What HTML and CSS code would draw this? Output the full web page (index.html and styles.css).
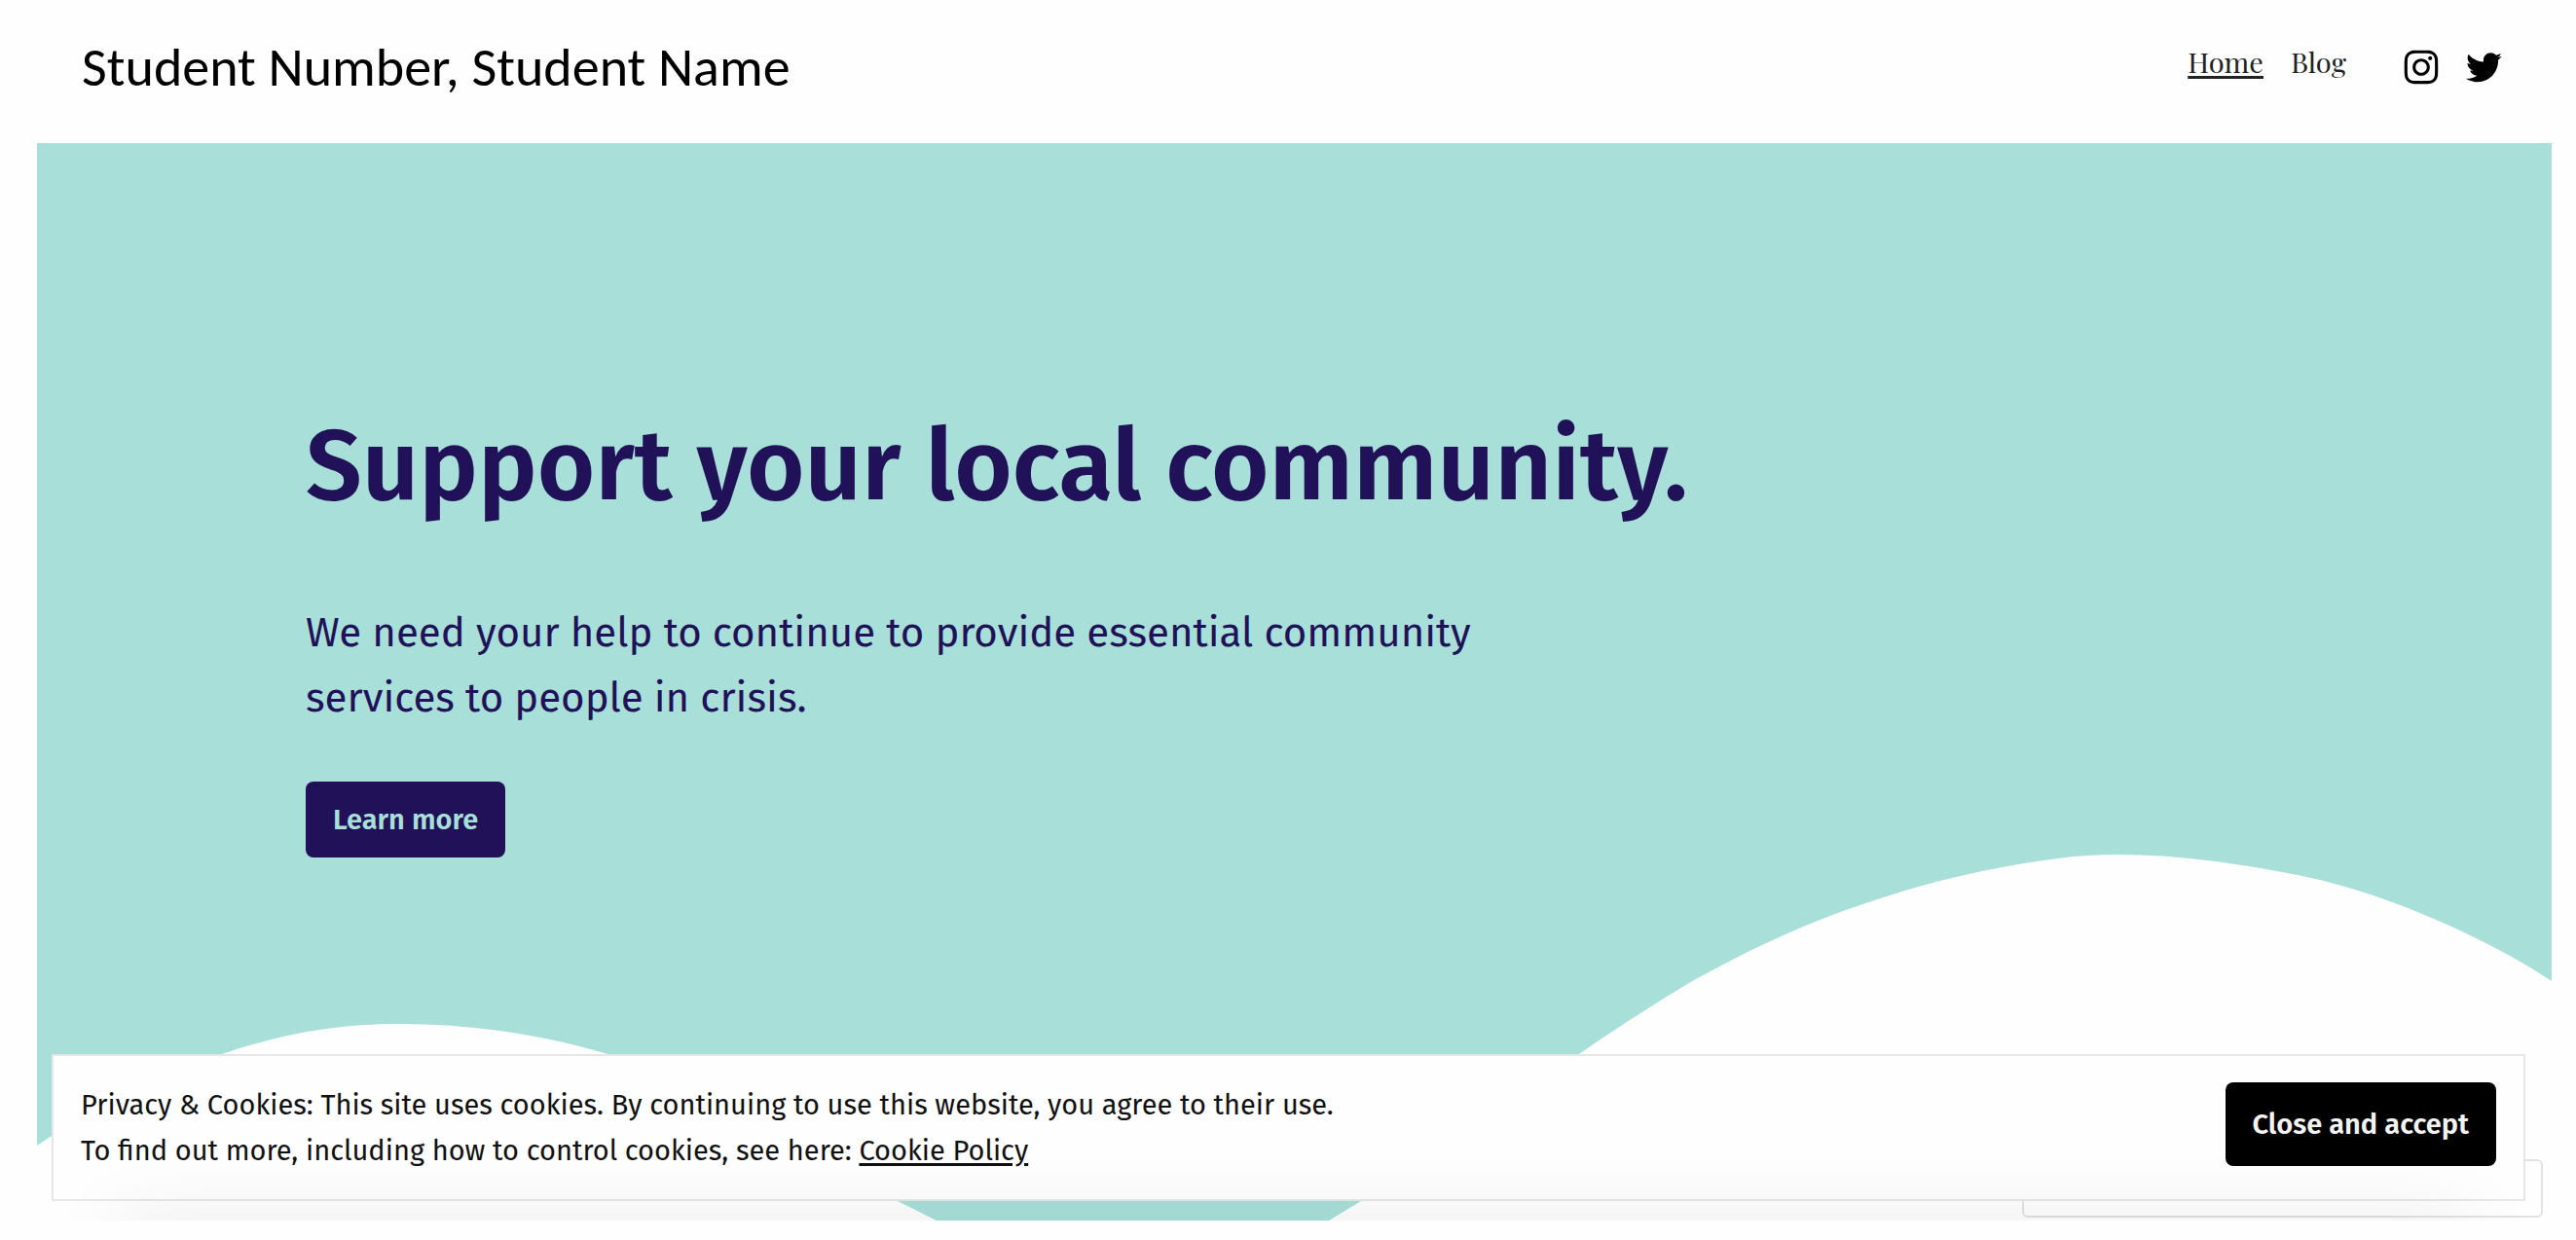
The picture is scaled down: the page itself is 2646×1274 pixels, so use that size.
FILE: index.html
```html
<!DOCTYPE html>
<html lang="en">
<head>
  <meta charset="utf-8">
  <meta name="viewport" content="width=device-width, initial-scale=1">
  <title>Student Number, Student Name</title>
  <link rel="stylesheet" href="styles.css">
</head>
<body>
  <header class="site-header">
    <p class="site-title">Student Number, Student Name</p>
    <nav class="site-nav" aria-label="Main">
      <a class="nav-link current" href="#" aria-current="page">Home</a>
      <a class="nav-link" href="#">Blog</a>
    </nav>
    <div class="social">
      <a class="social-link" href="#" aria-label="Instagram">
        <svg viewBox="0 0 24 24" width="46" height="46" aria-hidden="true"><path d="M12,4.622c2.403,0,2.688,0.009,3.637,0.052c0.877,0.04,1.354,0.187,1.671,0.31c0.42,0.163,0.72,0.358,1.035,0.673c0.315,0.315,0.51,0.615,0.673,1.035c0.123,0.317,0.27,0.794,0.31,1.671c0.043,0.949,0.052,1.234,0.052,3.637s-0.009,2.688-0.052,3.637c-0.04,0.877-0.187,1.354-0.31,1.671c-0.163,0.42-0.358,0.72-0.673,1.035c-0.315,0.315-0.615,0.51-1.035,0.673c-0.317,0.123-0.794,0.27-1.671,0.31c-0.949,0.043-1.233,0.052-3.637,0.052s-2.688-0.009-3.637-0.052c-0.877-0.04-1.354-0.187-1.671-0.31c-0.42-0.163-0.72-0.358-1.035-0.673c-0.315-0.315-0.51-0.615-0.673-1.035c-0.123-0.317-0.27-0.794-0.31-1.671C4.631,14.688,4.622,14.403,4.622,12s0.009-2.688,0.052-3.637c0.04-0.877,0.187-1.354,0.31-1.671c0.163-0.42,0.358-0.72,0.673-1.035c0.315-0.315,0.615-0.51,1.035-0.673c0.317-0.123,0.794-0.27,1.671-0.31C9.312,4.631,9.597,4.622,12,4.622M12,3C9.556,3,9.249,3.01,8.289,3.054C7.331,3.098,6.677,3.25,6.105,3.472C5.513,3.702,5.011,4.01,4.511,4.511c-0.5,0.5-0.808,1.002-1.038,1.594C3.25,6.677,3.098,7.331,3.054,8.289C3.01,9.249,3,9.556,3,12c0,2.444,0.01,2.751,0.054,3.711c0.044,0.958,0.196,1.612,0.418,2.185c0.23,0.592,0.538,1.094,1.038,1.594c0.5,0.5,1.002,0.808,1.594,1.038c0.572,0.222,1.227,0.375,2.185,0.418C9.249,20.99,9.556,21,12,21s2.751-0.01,3.711-0.054c0.958-0.044,1.612-0.196,2.185-0.418c0.592-0.23,1.094-0.538,1.594-1.038c0.5-0.5,0.808-1.002,1.038-1.594c0.222-0.572,0.375-1.227,0.418-2.185C20.99,14.751,21,14.444,21,12s-0.01-2.751-0.054-3.711c-0.044-0.958-0.196-1.612-0.418-2.185c-0.23-0.592-0.538-1.094-1.038-1.594c-0.5-0.5-1.002-0.808-1.594-1.038c-0.572-0.222-1.227-0.375-2.185-0.418C14.751,3.01,14.444,3,12,3L12,3z M12,7.378c-2.552,0-4.622,2.069-4.622,4.622S9.448,16.622,12,16.622s4.622-2.069,4.622-4.622S14.552,7.378,12,7.378z M12,15c-1.657,0-3-1.343-3-3s1.343-3,3-3s3,1.343,3,3S13.657,15,12,15z M16.804,6.116c-0.596,0-1.08,0.484-1.08,1.08s0.484,1.08,1.08,1.08c0.596,0,1.08-0.484,1.08-1.08S17.401,6.116,16.804,6.116z"/></svg>
      </a>
      <a class="social-link" href="#" aria-label="Twitter">
        <svg viewBox="0 0 24 24" width="44" height="44" aria-hidden="true"><path d="M22.23,5.924c-0.736,0.326-1.527,0.547-2.357,0.646c0.847-0.508,1.498-1.312,1.804-2.27c-0.793,0.47-1.671,0.812-2.606,0.996C18.324,4.498,17.257,4,16.077,4c-2.266,0-4.103,1.837-4.103,4.103c0,0.322,0.036,0.635,0.106,0.935C8.67,8.867,5.647,7.234,3.623,4.751C3.27,5.357,3.067,6.062,3.067,6.814c0,1.424,0.724,2.679,1.825,3.415c-0.673-0.021-1.305-0.206-1.859-0.513c0,0.017,0,0.034,0,0.052c0,1.988,1.414,3.647,3.292,4.023c-0.344,0.094-0.707,0.144-1.081,0.144c-0.264,0-0.521-0.026-0.772-0.074c0.522,1.63,2.038,2.816,3.833,2.85c-1.404,1.1-3.174,1.756-5.096,1.756c-0.331,0-0.658-0.019-0.979-0.057c1.816,1.164,3.973,1.843,6.29,1.843c7.547,0,11.675-6.252,11.675-11.675c0-0.178-0.004-0.355-0.012-0.531C20.985,7.47,21.68,6.747,22.23,5.924z"/></svg>
      </a>
    </div>
  </header>

  <main class="hero">
    <svg class="hills" viewBox="0 0 2583 1107" preserveAspectRatio="none" aria-hidden="true">
      <path d="M0 1030C60 990 125 955 193 935C255 914 310 905 373 905C440 905 510 914 583 935C700 970 800 1035 884 1087L924 1107H0Z"/>
      <path d="M1327 1107L1360 1087C1440 1025 1500 985 1584 936C1620 911 1660 885 1702 860C1738 840 1774 822 1812 806C1852 789 1894 775 1936 763C1982 750 2030 741 2076 735C2097 732 2117 731 2137 731C2168 731 2199 733 2229 737C2270 742 2311 749 2349 758C2388 768 2425 781 2462 797C2504 815 2545 836 2583 861V1107Z"/>
    </svg>
    <section class="hero-content">
      <h1 class="hero-title">Support your local community.</h1>
      <p class="hero-text">We need your help to continue to provide essential community services to people in crisis.</p>
      <button class="button button-learn" type="button">Learn more</button>
    </section>
    <div class="widget"></div>
    <aside class="cookie-banner" aria-label="Cookies">
      <p class="cookie-text">Privacy &amp; Cookies: This site uses cookies. By continuing to use this website, you agree to their use.<br>To find out more, including how to control cookies, see here: <a class="cookie-link" href="#">Cookie Policy</a></p>
      <button class="button button-accept" type="button">Close and accept</button>
    </aside>
    <div class="bottom-shade"></div>
  </main>
</body>
</html>
```
FILE: styles.css
```css
* {
  box-sizing: border-box;
}

body {
  margin: 0;
  background: #fefefe;
  color: #111;
  font-family: "Fira Sans", "Noto Sans", sans-serif;
}

/* Header */
.site-header {
  display: flex;
  align-items: flex-start;
  height: 147px;
  padding: 35px 73px 0 84px;
}

.site-title {
  margin: 0 auto 0 0;
  color: #000;
  font-family: Carlito, Calibri, Lato, sans-serif;
  font-size: 56px;
  line-height: 68px;
}

.site-nav {
  display: flex;
  gap: 28px;
  margin-right: 54px;
}

.nav-link {
  color: #222;
  font-family: "Playfair Display", "Liberation Serif", serif;
  font-size: 29px;
  line-height: 56px;
  text-decoration: none;
}

.current {
  text-decoration: underline;
  text-decoration-thickness: 3px;
  text-underline-offset: 3px;
  text-decoration-skip-ink: none;
}

.social {
  display: flex;
  align-items: center;
  gap: 19px;
  padding-top: 11px;
}

.social-link {
  display: flex;
  color: #000;
}

.social-link svg {
  fill: currentColor;
}

/* Hero */
.hero {
  position: relative;
  overflow: hidden;
  min-height: calc(100vh - 167px);
  margin: 0 25px 20px 38px;
  padding: 270px 276px 360px;
  background: #a8dfd9;
}

.hills {
  position: absolute;
  inset: 0;
  width: 100%;
  height: 100%;
  fill: #fefefe;
}

.hero-content {
  position: relative;
  color: #201158;
}

.hero-title {
  margin: 0 0 76px;
  font-size: 102px;
  font-weight: 600;
  line-height: 124px;
}

.hero-text {
  max-width: 1240px;
  margin: 0 0 52px;
  font-size: 42px;
  line-height: 67px;
}

.button {
  border: 0;
  border-radius: 8px;
  font-family: inherit;
  font-size: 29px;
  font-weight: 600;
  cursor: pointer;
}

.button-learn {
  height: 78px;
  padding: 0 28px;
  background: #201158;
  color: #a8dfd9;
}

/* Cookie banner and the box that sits behind it */
.widget {
  position: absolute;
  right: 9px;
  bottom: 3px;
  width: 535px;
  height: 60px;
  border: 2px solid #e2e2e2;
  border-radius: 6px;
  background: #fefefe;
}

.cookie-banner {
  position: absolute;
  right: 27px;
  bottom: 20px;
  left: 15px;
  display: flex;
  align-items: flex-start;
  justify-content: space-between;
  padding: 27px 28px 26px;
  border: 2px solid #e6e6e6;
  background: #fefefe;
}

.cookie-text {
  margin: 0;
  font-size: 29px;
  line-height: 47px;
}

.cookie-link {
  color: inherit;
  text-decoration-thickness: 3px;
  text-underline-offset: 3px;
}

.button-accept {
  height: 86px;
  padding: 0 28px;
  background: #000;
  color: #f2f2f2;
}

.bottom-shade {
  position: absolute;
  right: 80px;
  bottom: -60px;
  left: 80px;
  height: 60px;
  box-shadow: 0 0 80px rgba(0, 0, 0, 0.08);
  pointer-events: none;
}
```
